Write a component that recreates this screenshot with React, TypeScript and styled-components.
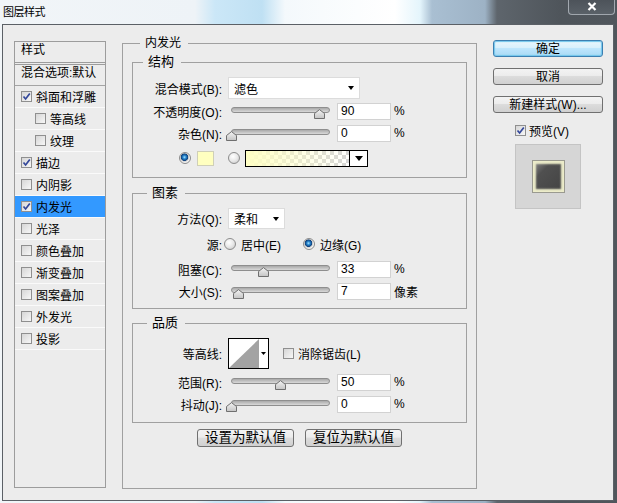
import React from 'react';
import styled, { createGlobalStyle, css } from 'styled-components';

const GlobalStyle = createGlobalStyle`
  html, body {
    margin: 0;
    padding: 0;
  }
  body {
    width: 617px;
    height: 503px;
    overflow: hidden;
    font-family: "Liberation Sans", "Noto Sans CJK SC", sans-serif;
    font-size: 12px;
    color: #000;
  }
`;

const Window = styled.div`
  width: 617px;
  height: 503px;
  display: flex;
  flex-direction: column;
  background: linear-gradient(
    to right,
    #f1f5f8 0px,
    #eef3f7 195px,
    #cbe7f7 215px,
    #bfe0f3 262px,
    #f4f9fc 285px,
    #ffffff 395px,
    #e4f5fc 420px,
    #a9bfd2 432px,
    #9db2c5 485px,
    #5e656c 497px,
    #4f555b 560px,
    #50565c 617px
  );
`;

const TitleBar = styled.div`
  height: 24px;
  display: flex;
  justify-content: space-between;
  align-items: flex-start;
`;

const Title = styled.span`
  font-family: "Noto Sans CJK SC", sans-serif;
  font-size: 11px;
  line-height: 14px;
  padding: 4px 0 0 3px;
  letter-spacing: -0.5px;
`;

const CloseButton = styled.div`
  width: 47px;
  height: 15px;
  margin-right: 2px;
  box-sizing: border-box;
  border: 1px solid rgba(230, 236, 242, 0.55);
  border-top: none;
  border-radius: 0 0 4px 4px;
  background: linear-gradient(#4d535a, #5a6168);
  display: flex;
  align-items: flex-start;
  justify-content: center;
  padding-top: 2px;
`;

const Body = styled.div`
  margin-left: 2px;
  width: 612px;
  height: 477px;
  box-sizing: border-box;
  border: 1px solid #5b6066;
  background: #ececec;
  display: flex;
  align-items: flex-start;
  padding: 11px 0 0 11px;
`;

/* ---------- left list ---------- */

const StyleList = styled.div`
  width: 92px;
  height: 447px;
  margin-top: 5px;
  box-sizing: border-box;
  border: 1px solid #9c9c9c;
  flex: none;
`;

const ListHeader = styled.div`
  height: 20px;
  line-height: 16px;
  padding-left: 6px;
  border-bottom: 3px double #9c9c9c;
`;

const ListBlend = styled.div`
  height: 20px;
  line-height: 16px;
  padding-left: 6px;
  white-space: nowrap;
  border-bottom: 1px solid #a4a4a4;
`;

const ListItem = styled.div<{ $sub?: boolean; $active?: boolean }>`
  height: 21px;
  display: flex;
  align-items: center;
  gap: 4px;
  padding-left: ${p => (p.$sub ? 20 : 6)}px;
  border-bottom: 1px solid #fafafa;
  white-space: nowrap;
  ${p =>
    p.$active &&
    css`
      background: #3399ff;
    `}
`;

const Box = styled.span`
  width: 11px;
  height: 11px;
  flex: none;
  box-sizing: border-box;
  border: 1px solid #8f8f8f;
  background: linear-gradient(135deg, #d6d6d6, #f7f7f7);
  display: inline-flex;
  align-items: center;
  justify-content: center;
`;

const Check = ({ on }: { on?: boolean }) => (
  <Box>
    {on && (
      <svg width="9" height="9" viewBox="0 0 9 9">
        <path d="M1.5 4.5 L3.6 7 L7.8 1.5" fill="none" stroke="#33479a" strokeWidth="1.7" />
      </svg>
    )}
  </Box>
);

/* ---------- fieldsets ---------- */

const Group = styled.fieldset<{ $pb?: number; $mt?: number }>`
  margin: ${p => p.$mt ?? 0}px 0 0 0;
  padding: 0 0 ${p => p.$pb ?? 0}px 0;
  border: 1px solid #a0a0a0;
  min-width: 0;
`;

const OuterGroup = styled(Group)`
  width: 355px;
  height: 453px;
  box-sizing: border-box;
  margin-left: 16px;
  padding: 0 9px;
  flex: none;
`;

const Legend = styled.legend<{ $ml: number; $fs?: number }>`
  margin-left: ${p => p.$ml}px;
  padding: 0 7px 0 5px;
  line-height: 14px;
  font-size: ${p => p.$fs ?? 12}px;
`;

const Row = styled.div<{ $h?: number; $mt?: number; $pl?: number }>`
  display: flex;
  align-items: center;
  height: ${p => p.$h ?? 22}px;
  margin-top: ${p => p.$mt ?? 0}px;
  padding-left: ${p => p.$pl ?? 0}px;
  white-space: nowrap;
`;

const Label = styled.span`
  width: 89px;
  flex: none;
  text-align: right;
`;

const Dropdown = styled.div<{ $w: number; $h?: number }>`
  width: ${p => p.$w}px;
  height: ${p => p.$h ?? 22}px;
  margin-left: 6px;
  box-sizing: border-box;
  padding: 0 5px 0 5px;
  border: 1px solid #dcdcdc;
  background: #fff;
  display: flex;
  align-items: center;
  justify-content: space-between;
`;

const Caret = styled.span<{ $big?: boolean }>`
  width: 0;
  height: 0;
  border-left: ${p => (p.$big ? 4 : 3)}px solid transparent;
  border-right: ${p => (p.$big ? 4 : 3)}px solid transparent;
  border-top: ${p => (p.$big ? 5 : 4)}px solid #000;
`;

const SliderWrap = styled.div`
  position: relative;
  width: 111px;
  height: 22px;
  margin-left: 4px;
  flex: none;
`;

const Track = styled.div`
  position: absolute;
  left: 5px;
  top: 7px;
  width: 99px;
  height: 6px;
  box-sizing: border-box;
  border: 1px solid #8e8e8e;
  border-radius: 3px;
  background: linear-gradient(#a9a9a9, #d9d9d9);
`;

const ThumbSvg = styled.svg`
  position: absolute;
  top: 9px;
`;

const Slider = ({ value }: { value: number }) => (
  <SliderWrap>
    <Track />
    <ThumbSvg width="11" height="10" viewBox="0 0 11 10" style={{ left: value * 0.98 }}>
      <defs>
        <linearGradient id="thumbFill" x1="0" y1="0" x2="0" y2="1">
          <stop offset="0" stopColor="#f4f4f4" />
          <stop offset="1" stopColor="#c4c4c4" />
        </linearGradient>
      </defs>
      <path d="M0.5 9.5 L0.5 4.5 L5.5 0.6 L10.5 4.5 L10.5 9.5 Z" fill="url(#thumbFill)" stroke="#6f6f6f" />
    </ThumbSvg>
  </SliderWrap>
);

const NumberField = styled.div`
  width: 54px;
  height: 17px;
  box-sizing: border-box;
  border: 1px solid #d2d2d2;
  background: #fff;
  padding-left: 3px;
  line-height: 15px;
  flex: none;
`;

const Unit = styled.span`
  margin-left: 3px;
`;

const Radio = styled.span<{ $on?: boolean; $ml?: number }>`
  width: 12px;
  height: 12px;
  flex: none;
  box-sizing: border-box;
  margin-left: ${p => p.$ml ?? 0}px;
  border-radius: 50%;
  border: 1px solid #8c8c8c;
  background: radial-gradient(circle at 40% 35%, #ffffff 0%, #e8e8e8 50%, #c2c2c2 100%);
  ${p =>
    p.$on &&
    css`
      background: radial-gradient(
        circle at 45% 42%,
        #a6e4ff 0px,
        #2b8ad2 1.6px,
        #0c3f7c 3.4px,
        #c8c8c8 4px,
        #f2f2f2 5px
      );
    `}
`;

const RadioText = styled.span`
  margin-left: 5px;
`;

const Swatch = styled.span`
  width: 17px;
  height: 15px;
  box-sizing: border-box;
  margin-left: 6px;
  border: 1px solid #cfcfb8;
  background: #ffffc0;
  flex: none;
`;

const GradientPicker = styled.div`
  width: 123px;
  height: 17px;
  margin-left: 5px;
  box-sizing: border-box;
  border: 1px solid #000;
  display: flex;
  flex: none;
`;

const GradientFill = styled.div`
  flex: 1;
  background:
    linear-gradient(to right, #ffffc4, rgba(255, 255, 196, 0)),
    repeating-conic-gradient(#d6d6d6 0 25%, #ffffff 0 50%) 0 0 / 8px 8px;
`;

const GradientArrow = styled.div`
  width: 17px;
  border-left: 1px solid #000;
  background: #fff;
  display: flex;
  align-items: center;
  justify-content: center;
`;

const ContourBox = styled.div`
  width: 41px;
  height: 31px;
  margin-left: 6px;
  box-sizing: border-box;
  border: 1px solid #000;
  background: #fff;
  flex: none;
  display: flex;
`;

const CheckLabel = styled.span<{ $ml?: number }>`
  display: inline-flex;
  align-items: center;
  gap: 4px;
  margin-left: ${p => p.$ml ?? 0}px;
`;

const ButtonRow = styled.div`
  display: flex;
  justify-content: center;
  gap: 11px;
  margin-top: 6px;
`;

const Button = styled.button<{ $w: number; $h?: number; $fs?: number; $primary?: boolean }>`
  width: ${p => p.$w}px;
  height: ${p => p.$h ?? 17}px;
  padding: 0;
  box-sizing: border-box;
  border: 1px solid #707070;
  border-radius: 3px;
  font-family: "Liberation Sans", "Noto Sans CJK SC", sans-serif;
  font-size: ${p => p.$fs ?? 12}px;
  line-height: 14px;
  color: #000;
  white-space: nowrap;
  background: linear-gradient(#f3f3f3 0%, #ececec 45%, #dcdcdc 50%, #d0d0d0 100%);
  ${p =>
    p.$primary &&
    css`
      border-color: #3c7fb1;
      background: linear-gradient(#e9f6fd 0%, #d8f0fc 45%, #bee6fd 50%, #a9daf5 100%);
      box-shadow: inset 0 0 1px 1px #72c6ec;
    `}
`;

/* ---------- right column ---------- */

const SideColumn = styled.div`
  width: 110px;
  margin-left: 16px;
  margin-top: 4px;
  display: flex;
  flex-direction: column;
  align-items: center;
  gap: 11px;
  flex: none;
`;

const PreviewRow = styled.div`
  height: 20px;
  margin-top: -4px;
  display: flex;
  align-items: center;
  gap: 3px;
  margin-left: -12px;
`;

const PreviewPane = styled.div`
  width: 66px;
  height: 65px;
  margin-top: -7px;
  box-sizing: border-box;
  border: 1px solid #c4c4c4;
  background: #d6d6d6;
  display: flex;
  align-items: center;
  justify-content: center;
`;

const PreviewTile = styled.div`
  width: 33px;
  height: 33px;
  box-sizing: border-box;
  border: 1px solid #9a9a90;
  background: linear-gradient(135deg, #8e8e8e 0%, #505050 32%, #424242 100%);
  box-shadow: inset 0 0 2px 3px #ececca;
`;

const effects: { name: string; on?: boolean; sub?: boolean; active?: boolean }[] = [
  { name: '斜面和浮雕', on: true },
  { name: '等高线', sub: true },
  { name: '纹理', sub: true },
  { name: '描边', on: true },
  { name: '内阴影' },
  { name: '内发光', on: true, active: true },
  { name: '光泽' },
  { name: '颜色叠加' },
  { name: '渐变叠加' },
  { name: '图案叠加' },
  { name: '外发光' },
  { name: '投影' },
];

export default function App() {
  return (
    <>
      <GlobalStyle />
      <Window>
        <TitleBar>
          <Title>图层样式</Title>
          <CloseButton>
            <svg width="10" height="9" viewBox="0 0 10 9">
              <path d="M1.5 1 L8.5 8 M8.5 1 L1.5 8" stroke="#fff" strokeWidth="2.2" />
            </svg>
          </CloseButton>
        </TitleBar>

        <Body>
          <StyleList>
            <ListHeader>样式</ListHeader>
            <ListBlend>混合选项:默认</ListBlend>
            {effects.map(e => (
              <ListItem key={e.name} $sub={e.sub} $active={e.active}>
                <Check on={e.on} />
                {e.name}
              </ListItem>
            ))}
          </StyleList>

          <OuterGroup as="fieldset">
            <Legend $ml={8}>内发光</Legend>

            <Group $mt={5} $pb={9}>
              <Legend $ml={10} $fs={13}>结构</Legend>
              <Row $mt={8}>
                <Label>混合模式(B):</Label>
                <Dropdown $w={132}>
                  <span>滤色</span>
                  <Caret />
                </Dropdown>
              </Row>
              <Row $mt={1}>
                <Label>不透明度(O):</Label>
                <Slider value={90} />
                <NumberField>90</NumberField>
                <Unit>%</Unit>
              </Row>
              <Row>
                <Label>杂色(N):</Label>
                <Slider value={0} />
                <NumberField>0</NumberField>
                <Unit>%</Unit>
              </Row>
              <Row $mt={4} $h={20} $pl={46}>
                <Radio $on />
                <Swatch />
                <Radio $ml={14} />
                <GradientPicker>
                  <GradientFill />
                  <GradientArrow>
                    <Caret $big />
                  </GradientArrow>
                </GradientPicker>
              </Row>
            </Group>

            <Group $mt={8} $pb={6}>
              <Legend $ml={14} $fs={13}>图素</Legend>
              <Row $mt={8} $h={21}>
                <Label>方法(Q):</Label>
                <Dropdown $w={57} $h={21}>
                  <span>柔和</span>
                  <Caret />
                </Dropdown>
              </Row>
              <Row $mt={5} $h={20}>
                <Label>源:</Label>
                <Radio $ml={2} />
                <RadioText>居中(E)</RadioText>
                <Radio $ml={22} $on />
                <RadioText>边缘(G)</RadioText>
              </Row>
              <Row $mt={4}>
                <Label>阻塞(C):</Label>
                <Slider value={33} />
                <NumberField>33</NumberField>
                <Unit>%</Unit>
              </Row>
              <Row>
                <Label>大小(S):</Label>
                <Slider value={7} />
                <NumberField>7</NumberField>
                <Unit>像素</Unit>
              </Row>
            </Group>

            <Group $mt={7} $pb={7}>
              <Legend $ml={14} $fs={13}>品质</Legend>
              <Row $mt={8} $h={31}>
                <Label>等高线:</Label>
                <ContourBox>
                  <svg width="39" height="29" viewBox="0 0 39 29">
                    <polygon points="0,29 30,0 30,29" fill="#a3a3a3" />
                    <polygon points="32,13 37,13 34.5,16" fill="#000" />
                  </svg>
                </ContourBox>
                <CheckLabel $ml={14}>
                  <Check />
                  消除锯齿(L)
                </CheckLabel>
              </Row>
              <Row $mt={2}>
                <Label>范围(R):</Label>
                <Slider value={50} />
                <NumberField>50</NumberField>
                <Unit>%</Unit>
              </Row>
              <Row>
                <Label>抖动(J):</Label>
                <Slider value={0} />
                <NumberField>0</NumberField>
                <Unit>%</Unit>
              </Row>
            </Group>

            <ButtonRow>
              <Button $w={97} $h={18} $fs={13.5}>设置为默认值</Button>
              <Button $w={97} $h={18} $fs={13.5}>复位为默认值</Button>
            </ButtonRow>
          </OuterGroup>

          <SideColumn>
            <Button $w={110} $primary>确定</Button>
            <Button $w={110}>取消</Button>
            <Button $w={110}>新建样式(W)...</Button>
            <PreviewRow>
              <Check on />
              预览(V)
            </PreviewRow>
            <PreviewPane>
              <PreviewTile />
            </PreviewPane>
          </SideColumn>
        </Body>
      </Window>
    </>
  );
}
